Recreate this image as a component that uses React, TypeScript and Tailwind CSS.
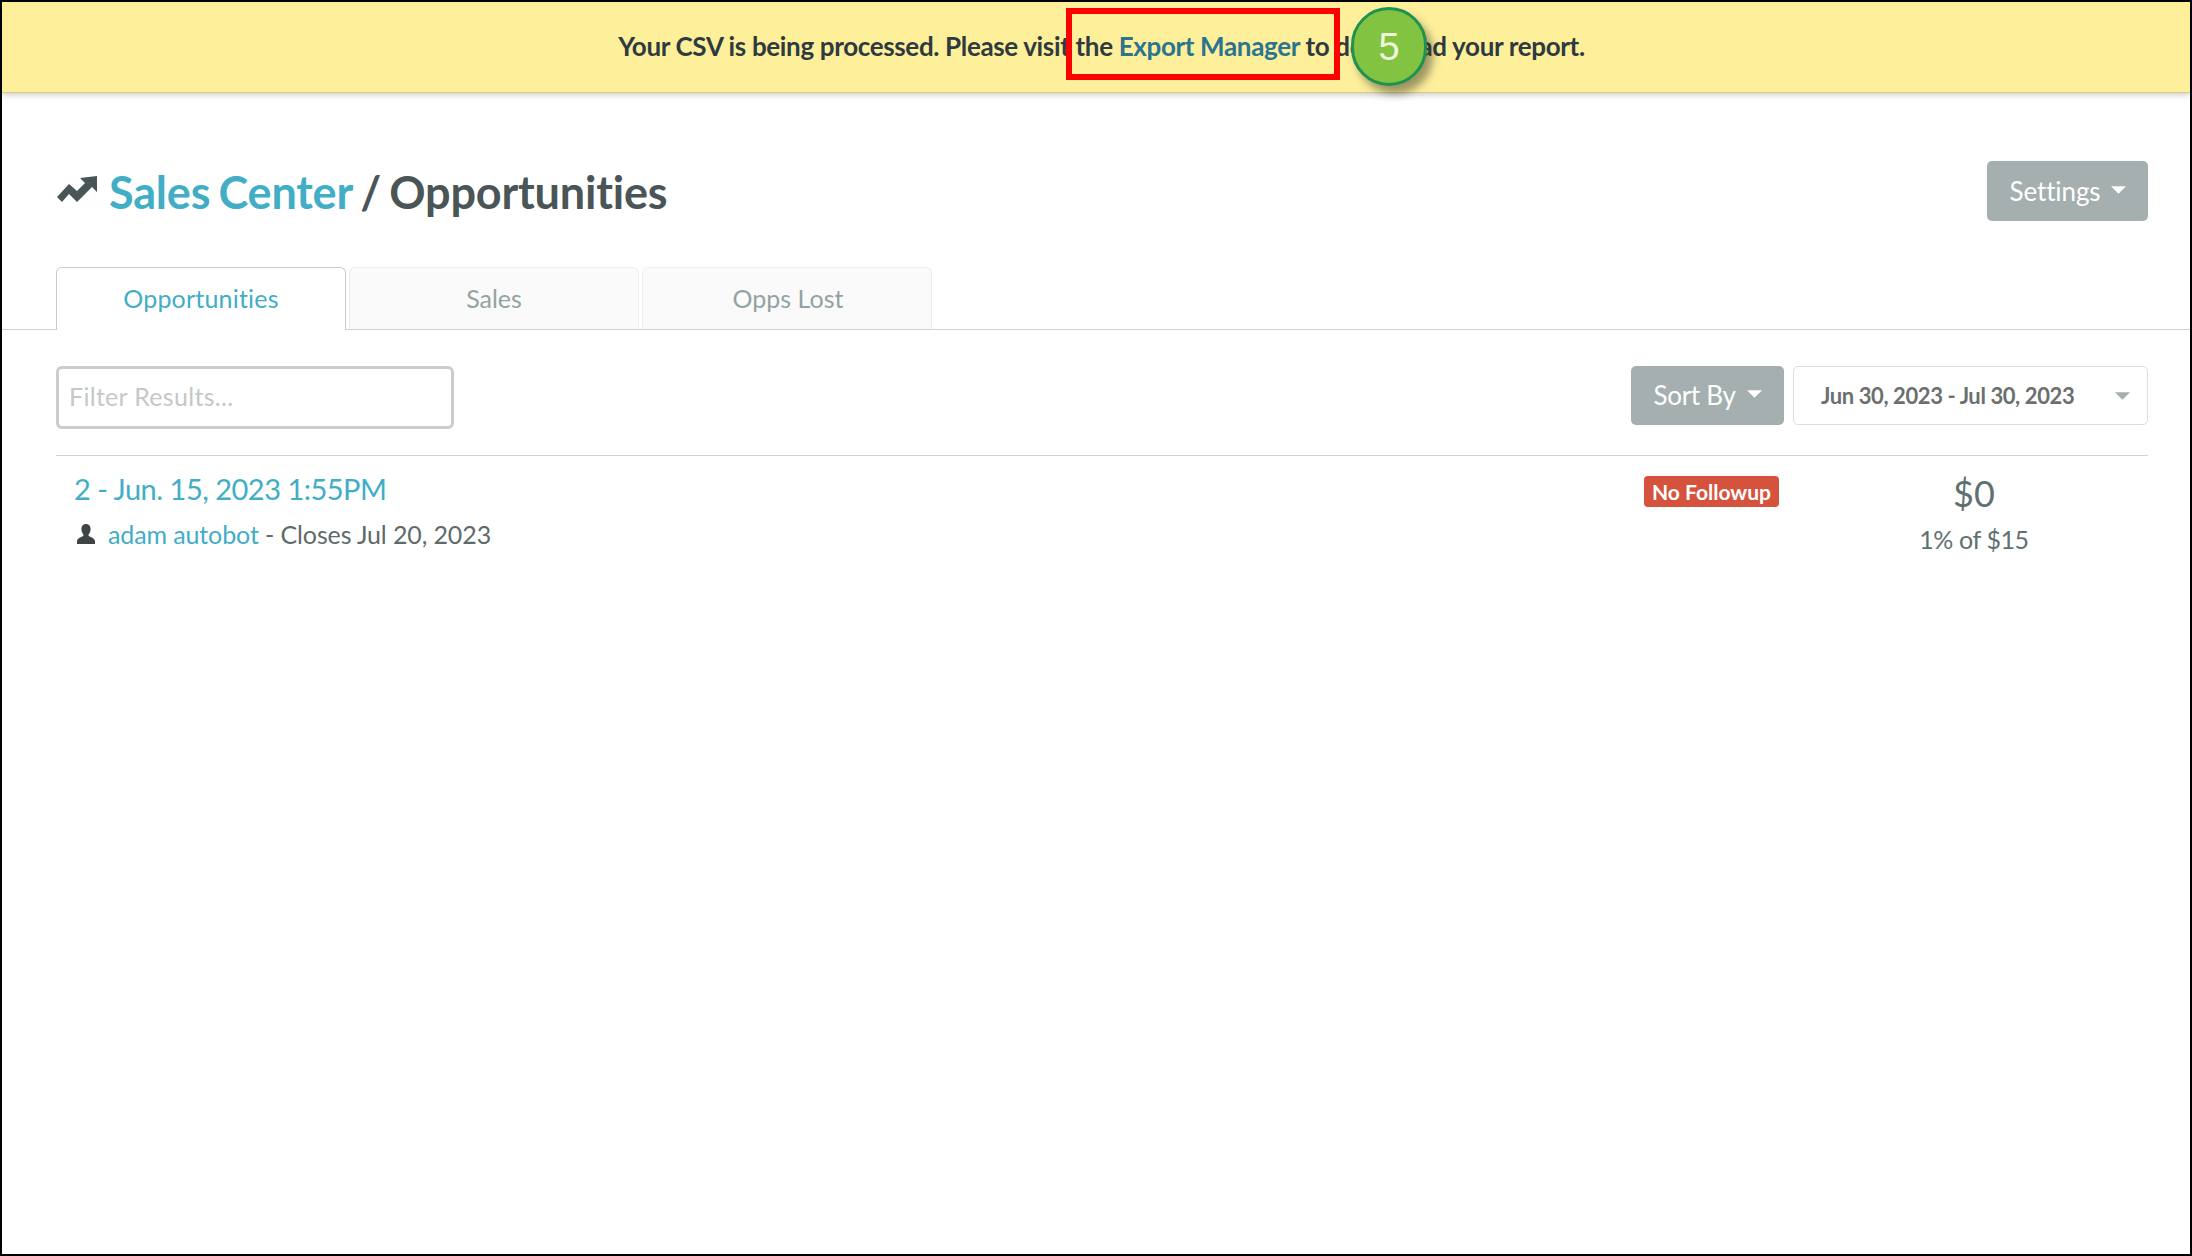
import React from "react";

const Caret = ({ className }: { className: string }) => (
  <svg viewBox="0 0 14 7" className={className} fill="currentColor"><path d="M0 0h14L7 7z" /></svg>
);

export default function App() {
  return (
    <div className="relative h-[1256px] w-[2192px] overflow-hidden border-2 border-black bg-white font-['Lato','Liberation_Sans',sans-serif] text-[#4a5557] [font-variant-ligatures:none]">
      <div className="flex h-[91px] items-center justify-center border-b border-[#d8cc8a] bg-[#fef09b] pb-[1px] pl-[11px] text-[26px] font-bold text-[#2f3a40] shadow-[0_2px_6px_rgba(0,0,0,0.2)]">
        <span className="tracking-[-0.35px]">Your CSV is being processed. Please visit the <span className="text-[#2a7490]">Export Manager</span> to download your report.</span>
      </div>

      <div className="flex items-start justify-between pl-[55px] pr-[42px] pt-[68px]">
        <div className="mt-[3px] flex items-center gap-[12px] text-[45px] font-bold leading-[56px] tracking-[-0.2px] [word-spacing:-2.5px]">
          <svg viewBox="0 0 40 28" className="mb-[4px] h-[28px] w-[40px]" fill="currentColor"><path d="M0 21 12 8l8 7 8-8-5-5L40 0v16l-5-5-15 15-8-8-7 8z" /></svg>
          <div><span className="text-[#41aec6]">Sales Center</span> <span>/ Opportunities</span></div>
        </div>
        <button className="flex h-[60px] w-[161px] items-center justify-center gap-[10px] rounded-[5px] bg-[#a5afaf] text-[26px] tracking-[-0.1px] text-white">
          Settings <Caret className="mb-[3px] h-[8px] w-[15px]" />
        </button>
      </div>

      <div className="mt-[46px] flex h-[63px] gap-[3px] border-b border-[#cfd3d3] px-[54px]">
        <div className="-mb-[1px] flex w-[290px] items-center justify-center rounded-t-[6px] border border-b-0 border-[#c8cccc] bg-white text-[25px] tracking-[0.2px] text-[#41aec6]">Opportunities</div>
        <div className="flex w-[290px] items-center justify-center rounded-t-[6px] border border-b-0 border-[#eeeeee] bg-[#fafafa] text-[25px] text-[#93a3a3]">Sales</div>
        <div className="flex w-[290px] items-center justify-center rounded-t-[6px] border border-b-0 border-[#eeeeee] bg-[#fafafa] pl-[2px] text-[25px] text-[#93a3a3]">Opps Lost</div>
      </div>

      <div className="mt-[36px] flex items-start justify-between pl-[54px] pr-[42px]">
        <div className="flex h-[63px] w-[398px] items-center rounded-[6px] border-[3px] border-[#c8cdcd] px-[10px] pb-[1px] text-[25px] tracking-[0.3px] text-[#c4c8c8]">Filter Results...</div>
        <div className="flex gap-[9px]">
          <button className="flex h-[59px] w-[153px] items-center justify-center gap-[11px] rounded-[5px] bg-[#a5afaf] text-[26px] tracking-[-0.3px] text-white">
            Sort By <Caret className="mb-[3px] h-[8px] w-[15px]" />
          </button>
          <div className="flex h-[59px] w-[355px] items-center justify-between rounded-[5px] border border-[#dddddd] pl-[27px] pr-[17px] text-[22px] font-bold tracking-[-0.4px] text-[#6b6f70]">
            Jun 30, 2023 - Jul 30, 2023 <Caret className="h-[8px] w-[15px] text-[#a5afaf]" />
          </div>
        </div>
      </div>

      <div className="ml-[54px] mr-[42px] mt-[26px] flex border-t border-[#cfd3d3]">
        <div className="flex-1 pl-[18px] pt-[13px]">
          <div className="text-[29px] leading-[40px] tracking-[-0.5px] text-[#41aec6]">2 - Jun. 15, 2023 1:55PM</div>
          <div className="mt-[7px] flex items-center text-[25px] leading-[36px] tracking-[-0.12px] text-[#5f6a6b]">
            <svg viewBox="0 0 18 20" className="ml-[3px] mr-[13px] h-[20px] w-[18px] text-[#3f4546]" fill="currentColor"><path d="M9 0c3 0 4.600 2.200 4.600 5.200 0 2.200-1 4-2 5.200v1.600c1.600.9 6.400 2.200 6.400 5.200V20H0v-2.800C0 14.200 4.800 12.900 6.400 12v-1.600c-1-1.200-2-3-2-5.200C4.400 2.200 6 0 9 0z" /></svg>
            <span className="text-[#41aec6]">adam autobot</span>&nbsp;- Closes Jul 20, 2023
          </div>
        </div>
        <div className="mr-[21px] mt-[20px] flex h-[31px] w-[135px] items-center justify-center rounded-[4px] bg-[#d5533c] text-[21px] font-bold text-white">No Followup</div>
        <div className="w-[348px] pt-[12px] text-center text-[#5f7070]">
          <div className="text-[36px] leading-[50px]">$0</div>
          <div className="mt-[3px] text-[25px] leading-[36px] tracking-[-0.4px]">1% of $15</div>
        </div>
      </div>

      <div className="absolute left-[1064px] top-[6px] h-[72px] w-[274px] border-[6px] border-[#ff0000]" />
      <div className="absolute left-[1349px] top-[5px] flex h-[79px] w-[76px] items-center justify-center rounded-full border-[3px] border-[#1f9150] bg-[#82c341] pt-[2px] font-['Liberation_Sans',sans-serif] text-[38px] text-[#eef7dc] shadow-[6px_8px_8px_rgba(60,60,40,0.5)]">5</div>
    </div>
  );
}
